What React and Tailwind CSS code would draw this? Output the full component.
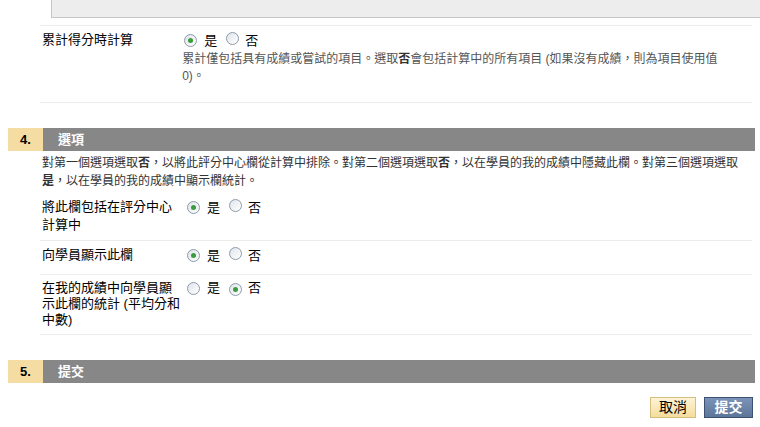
import React from "react";

const font = { fontFamily: '"Liberation Sans", "Noto Sans CJK TC", sans-serif' };

function Radio({ checked }) {
  return (
    <span className="relative inline-flex h-[13px] w-[13px] items-center justify-center rounded-full border border-[#8c9bab] bg-gradient-to-br from-[#dfe4ea] to-[#ffffff]">
      {checked && <span className="h-[5px] w-[5px] rounded-full bg-[#3c9b3c]" />}
    </span>
  );
}

function YesNo({ yes }) {
  return (
    <div className="ml-[2px] flex items-center text-[13px] leading-[16px] text-black">
      <Radio checked={yes} />
      <span className="ml-[7px]">是</span>
      <span className="ml-[9px]">
        <Radio checked={!yes} />
      </span>
      <span className="ml-[6px]">否</span>
    </div>
  );
}

function SectionHeader({ num, title }) {
  return (
    <div className="ml-[8px] mr-[5px] flex h-[23px]">
      <div className="flex w-[35px] items-center justify-center bg-[#f4dca2] text-[13px] font-bold text-black">
        {num}
      </div>
      <div className="flex flex-1 items-center bg-[#878787] pl-[15px] text-[13px] font-bold text-white">
        {title}
      </div>
    </div>
  );
}

export default function App() {
  return (
    <div className="h-[427px] w-[760px] overflow-hidden bg-white" style={font}>
      <div className="ml-[51px] h-[18px] border-b border-l border-[#c6c6c6] bg-[#ededed]" />

      <div className="ml-[40px] mr-[8px] mt-[7px] flex items-start border-t border-b border-[#ececec] pb-[17px] pt-[6px]">
        <div className="w-[145px] pl-[2px] text-[13px] leading-[16px] text-black">累計得分時計算</div>
        <div className="flex flex-col">
          <YesNo yes />
          <p className="mt-[2px] pr-[20px] text-[12px] leading-[17px] text-[#555]">
            累計僅包括具有成績或嘗試的項目。選取<b className="text-[#333]">否</b>會包括計算中的所有項目 (如果沒有成績，則為項目使用值 0)。
          </p>
        </div>
      </div>

      <div className="mt-[25px]">
        <SectionHeader num="4." title="選項" />
      </div>

      <p className="ml-[42px] mr-[10px] mt-[3px] text-[12px] leading-[18px] text-[#333]">
        對第一個選項選取<b>否</b>，以將此評分中心欄從計算中排除。對第二個選項選取<b>否</b>，以在學員的我的成績中隱藏此欄。對第三個選項選取<b>是</b>，以在學員的我的成績中顯示欄統計。
      </p>

      <div className="ml-[40px] mr-[8px]">
        <div className="flex items-start border-b border-[#ececec] pb-[6px] pt-[8px]">
          <div className="w-[145px] pl-[2px] text-[13px] leading-[18px] text-black">
            將此欄包括在評分中心
            <br />
            計算中
          </div>
          <div className="pt-[1px]">
            <YesNo yes />
          </div>
        </div>
        <div className="flex items-start border-b border-[#ececec] pb-[10px] pt-[6px]">
          <div className="w-[145px] pl-[2px] text-[13px] leading-[16px] text-black">向學員顯示此欄</div>
          <YesNo yes />
        </div>
        <div className="flex items-start border-b border-[#ececec] pb-[6px] pt-[5px]">
          <div className="w-[145px] pl-[2px] text-[13px] leading-[16px] text-black">
            在我的成績中向學員顯
            <br />
            示此欄的統計 (平均分和
            <br />
            中數)
          </div>
          <YesNo yes={false} />
        </div>
      </div>

      <div className="mt-[25px]">
        <SectionHeader num="5." title="提交" />
      </div>

      <div className="mr-[7px] mt-[14px] flex justify-end gap-[8px]">
        <button className="h-[21px] w-[46px] border border-[#d6bf7e] bg-gradient-to-b from-[#fdf4d6] to-[#f4dc9c] text-[14px] leading-[19px] text-black">
          取消
        </button>
        <button className="h-[21px] w-[49px] border border-[#3c5070] bg-gradient-to-b from-[#7b93b8] to-[#5d7598] text-[14px] font-bold leading-[19px] text-white">
          提交
        </button>
      </div>
    </div>
  );
}
